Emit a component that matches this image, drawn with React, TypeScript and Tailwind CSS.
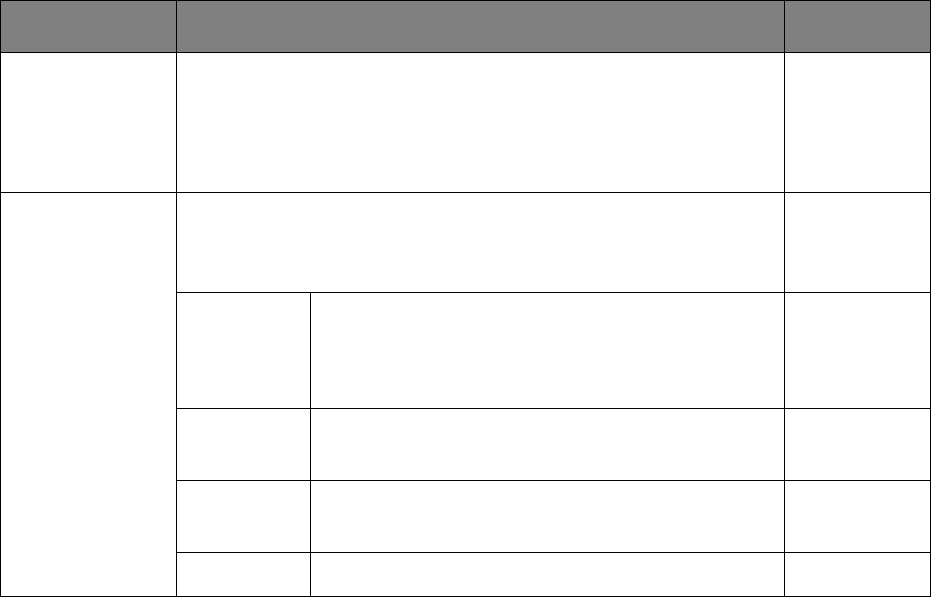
export default function App() {
  const cell = "bg-white";
  const head = "bg-[#808080]";
  return (
    <div className="w-[931px] h-[597px] bg-white">
      <div className="grid grid-cols-[175px_133px_473px_145px] grid-rows-[51px_139px_99px_115px_71px_71px_43px] gap-px bg-black p-px w-[931px] h-[597px]">
        <div className={head} />
        <div className={`${head} col-span-2`} />
        <div className={head} />

        <div className={cell} />
        <div className={`${cell} col-span-2`} />
        <div className={cell} />

        <div className={`${cell} row-span-5`} />
        <div className={`${cell} col-span-2`} />
        <div className={cell} />

        <div className={cell} />
        <div className={cell} />
        <div className={cell} />

        <div className={cell} />
        <div className={cell} />
        <div className={cell} />

        <div className={cell} />
        <div className={cell} />
        <div className={cell} />

        <div className={cell} />
        <div className={cell} />
        <div className={cell} />
      </div>
    </div>
  );
}
